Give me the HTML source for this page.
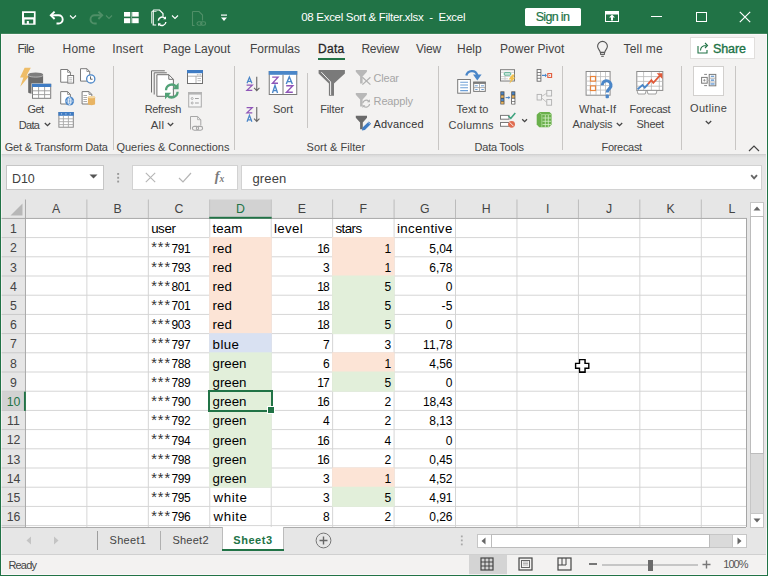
<!DOCTYPE html>
<html><head><meta charset="utf-8"><style>
html,body{margin:0;padding:0;width:768px;height:576px;overflow:hidden;background:#217346;}
body{position:relative;font-family:"Liberation Sans", sans-serif;}
.t{position:absolute;line-height:0;white-space:nowrap;font-family:"Liberation Sans", sans-serif;}
svg{overflow:visible}
</style></head><body>
<div style="position:absolute;left:0px;top:0px;width:768px;height:576px;background:#217346"></div>
<div style="position:absolute;left:1px;top:34px;width:766px;height:541px;background:#f3f2f1"></div>
<div style="position:absolute;left:1px;top:33px;width:766px;height:1px;background:#40845c"></div>
<div style="position:absolute;left:1px;top:34px;width:766px;height:1px;background:#fbf9f9"></div>
<svg style="position:absolute;left:0px;top:0px;" width="768" height="576" viewBox="0 0 768 576"><path d="M22 11.3H35.6V24.7H22z M24 13.1H33.9V17.3H24z M24.6 19.5H33.2V23.6H28.9V21.1H26.8V23.6H24.6z" fill="#fff" fill-rule="evenodd"/></svg>
<svg style="position:absolute;left:49px;top:10px;" width="18" height="16" viewBox="0 0 18 16"><path d="M2 5.3H9.6a4.1 4.1 0 0 1 0 8.2H7.5" fill="none" stroke="#fff" stroke-width="1.9"/><path d="M5.6 1.6L1.8 5.3l3.8 3.7" fill="none" stroke="#fff" stroke-width="1.9"/></svg>
<svg style="position:absolute;left:69px;top:14px;" width="8" height="6" viewBox="0 0 8 6"><path d="M1 1.5l3 3 3-3" fill="none" stroke="#fff" stroke-width="1.1"/></svg>
<svg style="position:absolute;left:87px;top:10px;" width="18" height="16" viewBox="0 0 18 16"><path d="M15.2 5.3H7.6a4.1 4.1 0 0 0 0 8.2H9.7" fill="none" stroke="#4f8f67" stroke-width="1.9"/><path d="M11.4 1.6l3.8 3.7-3.8 3.7" fill="none" stroke="#4f8f67" stroke-width="1.9"/></svg>
<svg style="position:absolute;left:105px;top:14px;" width="8" height="6" viewBox="0 0 8 6"><path d="M1 1.5l3 3 3-3" fill="none" stroke="#4f8f67" stroke-width="1.1"/></svg>
<svg style="position:absolute;left:123.5px;top:12px;" width="15" height="12" viewBox="0 0 15 12"><rect x="0" y="0" width="6.2" height="4.6" fill="#fff"/><rect x="8.2" y="0" width="6.5" height="4.6" fill="#fff"/><rect x="0" y="6.2" width="6.2" height="5" fill="#fff"/><rect x="8.2" y="6.2" width="6.5" height="5" fill="#fff"/><rect x="6.9" y="0" width="0.8" height="11.2" fill="#9fc4ad"/></svg>
<svg style="position:absolute;left:150px;top:9px;" width="18" height="18" viewBox="0 0 18 18"><path d="M1.5 2.5h5M1.5 2.5v12" fill="none" stroke="#bcd6c4" stroke-width="1"/><path d="M3.2 1h6.3l3.5 3.5v3" fill="none" stroke="#fff" stroke-width="1.2"/><path d="M3.2 1v15h3" fill="none" stroke="#fff" stroke-width="1.2"/><path d="M8.3 11.6a3.9 3.9 0 0 1 6.8-2.2M15.9 13a3.9 3.9 0 0 1-6.8 2.2" fill="none" stroke="#fff" stroke-width="1.4"/><path d="M16 7.3v2.9h-2.9zM8 17.2v-2.9h2.9z" fill="#fff"/></svg>
<svg style="position:absolute;left:171px;top:14px;" width="8" height="6" viewBox="0 0 8 6"><path d="M1 1.5l3 3 3-3" fill="none" stroke="#fff" stroke-width="1.1"/></svg>
<svg style="position:absolute;left:191px;top:10px;" width="15" height="17" viewBox="0 0 15 17"><path d="M1.5 1.5h6.5l3.5 3.5v5.5M1.5 1.5v14h2" fill="none" stroke="#4f8f67" stroke-width="1.1"/><path d="M6 13.5a1.7 1.7 0 0 1 1.7-1.7h1.6a1.7 1.7 0 0 1 0 3.4h-1.6A1.7 1.7 0 0 1 6 13.5zM9.6 13.5a1.7 1.7 0 0 1 1.7-1.7h1.6a1.7 1.7 0 0 1 0 3.4h-1.6a1.7 1.7 0 0 1-1.7-1.7z" fill="none" stroke="#4f8f67" stroke-width="1.1"/></svg>
<svg style="position:absolute;left:220px;top:14px;" width="8" height="8" viewBox="0 0 8 8"><rect x="1" y="0.5" width="6" height="1.2" fill="#fff"/><path d="M1 3.5h6l-3 3.5z" fill="#fff"/></svg>
<div class="t" style="left:301.25px;top:17.00px;font-size:11.5px;color:#fff;font-weight:normal;letter-spacing:-0.303px;white-space:pre">08 Excel Sort &amp; Filter.xlsx  -  Excel</div>
<div style="position:absolute;left:525px;top:8px;width:56px;height:18px;background:#fff;border-radius:1.5px"></div>
<div class="t" style="left:535.70px;top:17.00px;font-size:12.5px;color:#217346;font-weight:normal;letter-spacing:-0.661px;-webkit-text-stroke:0.2px currentColor">Sign in</div>
<svg style="position:absolute;left:605px;top:11px;" width="14" height="11" viewBox="0 0 14 11"><rect x="0.5" y="0.5" width="13" height="10" fill="none" stroke="#fff" stroke-width="1"/><rect x="1" y="1" width="12" height="2.5" fill="#fff"/><path d="M7 3.5l-3 3h2v3h2v-3h2z" fill="#fff"/></svg>
<div style="position:absolute;left:651px;top:16px;width:11px;height:1px;background:#fff"></div>
<div style="position:absolute;left:696px;top:12px;width:10px;height:9px;border:1px solid #fff;box-sizing:border-box;width:11px;height:10px"></div>
<svg style="position:absolute;left:739px;top:11px;" width="12" height="12" viewBox="0 0 12 12"><path d="M0.8 0.8l10.4 10.4M11.2 0.8L0.8 11.2" stroke="#fff" stroke-width="1.2"/></svg>
<div class="t" style="left:17.50px;top:49.00px;font-size:12px;color:#444;font-weight:normal;letter-spacing:-0.721px;">File</div>
<div class="t" style="left:62.50px;top:49.00px;font-size:12px;color:#444;font-weight:normal;letter-spacing:0.221px;">Home</div>
<div class="t" style="left:112.30px;top:49.00px;font-size:12px;color:#444;font-weight:normal;letter-spacing:0.154px;">Insert</div>
<div class="t" style="left:163.00px;top:49.00px;font-size:12px;color:#444;font-weight:normal;letter-spacing:-0.005px;">Page Layout</div>
<div class="t" style="left:250.00px;top:49.00px;font-size:12px;color:#444;font-weight:normal;letter-spacing:-0.001px;">Formulas</div>
<div class="t" style="left:318.00px;top:49.00px;font-size:12px;color:#262626;font-weight:normal;letter-spacing:0.275px;-webkit-text-stroke:0.3px currentColor">Data</div>
<div class="t" style="left:361.50px;top:49.00px;font-size:12px;color:#444;font-weight:normal;letter-spacing:-0.336px;">Review</div>
<div class="t" style="left:416.00px;top:49.00px;font-size:12px;color:#444;font-weight:normal;letter-spacing:-0.209px;">View</div>
<div class="t" style="left:457.00px;top:49.00px;font-size:12px;color:#444;font-weight:normal;letter-spacing:-0.002px;">Help</div>
<div class="t" style="left:500.00px;top:49.00px;font-size:12px;color:#444;font-weight:normal;letter-spacing:0.031px;">Power Pivot</div>
<div style="position:absolute;left:318px;top:58px;width:27px;height:2px;background:#217346"></div>
<svg style="position:absolute;left:0px;top:0px;" width="768" height="576" viewBox="0 0 768 576"><path d="M600.2 52.3C600.2 50.6 597.6 48.8 597.6 46.3A4.9 4.9 0 0 1 607.4 46.3C607.4 48.8 604.8 50.6 604.8 52.3z" fill="none" stroke="#555" stroke-width="1.1"/><rect x="600.6" y="52.6" width="3.8" height="1.8" fill="none" stroke="#555" stroke-width="1"/><path d="M601.2 56.3H603.8" stroke="#555" stroke-width="1"/></svg>
<div class="t" style="left:623.50px;top:49.00px;font-size:12px;color:#444;font-weight:normal;letter-spacing:0.194px;">Tell me</div>
<div style="position:absolute;left:690px;top:37px;width:65px;height:22px;background:#fff;border:1px solid #e1dfdd;box-sizing:border-box"></div>
<svg style="position:absolute;left:697px;top:41px;" width="12" height="13" viewBox="0 0 12 13"><path d="M1 5v7h9V9" fill="none" stroke="#217346" stroke-width="1.1"/><path d="M3.5 9.5c0-3.5 2.5-5 6-5M8 2l2.5 2.5L8 7" fill="none" stroke="#217346" stroke-width="1.1"/></svg>
<div class="t" style="left:713.00px;top:49.00px;font-size:12.5px;color:#217346;font-weight:normal;letter-spacing:-0.101px;-webkit-text-stroke:0.35px currentColor">Share</div>
<div style="position:absolute;left:1px;top:154px;width:765px;height:4px;background:linear-gradient(#cdcdcd,#dcdcdc 40%,#e6e6e6)"></div>
<div style="position:absolute;left:113px;top:66px;width:1px;height:84px;background:#c8c6c4"></div>
<div style="position:absolute;left:233.5px;top:66px;width:1px;height:84px;background:#c8c6c4"></div>
<div style="position:absolute;left:438px;top:66px;width:1px;height:84px;background:#c8c6c4"></div>
<div style="position:absolute;left:561.5px;top:66px;width:1px;height:84px;background:#c8c6c4"></div>
<div style="position:absolute;left:681px;top:66px;width:1px;height:84px;background:#c8c6c4"></div>
<div style="position:absolute;left:735px;top:66px;width:1px;height:84px;background:#c8c6c4"></div>
<div style="position:absolute;left:307px;top:73px;width:1px;height:55px;background:#c8c6c4"></div>
<div class="t" style="left:4.70px;top:147.00px;font-size:11px;color:#444;font-weight:normal;letter-spacing:-0.198px;">Get &amp; Transform Data</div>
<div class="t" style="left:116.40px;top:147.00px;font-size:11px;color:#444;font-weight:normal;letter-spacing:-0.001px;">Queries &amp; Connections</div>
<div class="t" style="left:306.60px;top:147.00px;font-size:11px;color:#444;font-weight:normal;letter-spacing:0.033px;">Sort &amp; Filter</div>
<div class="t" style="left:474.60px;top:147.00px;font-size:11px;color:#444;font-weight:normal;letter-spacing:-0.263px;">Data Tools</div>
<div class="t" style="left:601.50px;top:147.00px;font-size:11px;color:#444;font-weight:normal;letter-spacing:-0.305px;">Forecast</div>
<svg style="position:absolute;left:748px;top:145px;" width="12" height="7" viewBox="0 0 12 7"><path d="M1 6l5-5 5 5" fill="none" stroke="#444" stroke-width="1.2"/></svg>
<div class="t" style="left:27.50px;top:109.00px;font-size:11px;color:#444;font-weight:normal;letter-spacing:-0.587px;">Get</div>
<div class="t" style="left:18.70px;top:125.00px;font-size:11px;color:#444;font-weight:normal;letter-spacing:-0.673px;">Data</div>
<svg style="position:absolute;left:44px;top:122px;" width="7" height="5" viewBox="0 0 7 5"><path d="M0.8 1l2.7 2.7L6.2 1" fill="none" stroke="#444" stroke-width="1.3"/></svg>
<svg style="position:absolute;left:0px;top:0px;" width="768" height="576" viewBox="0 0 768 576"><path d="M24.6 67.8H30.8L26.6 75.6H29.6L20.2 86.8L23.4 77.6H20z" fill="#eebd68"/><path d="M28.2 74.8C28.2 72.9 43.1 72.9 43.1 74.8V92.2C43.1 94.6 28.2 94.6 28.2 92.2z" fill="#6b6b6b"/><ellipse cx="35.65" cy="74.8" rx="7.45" ry="2.4" fill="#7d7d7d"/><path d="M28.4 75.6C30 77.6 41.3 77.6 42.9 75.6" fill="none" stroke="#cfcfcf" stroke-width="0.7"/><rect x="31.5" y="83.3" width="20" height="15.9" fill="#f3f2f1"/><rect x="32.5" y="84.3" width="18.2" height="14" fill="#fff" stroke="#7d7d7d" stroke-width="1"/><rect x="32" y="83.8" width="19.2" height="3.2" fill="#3f7cc4"/><path d="M32.5 90.8H50.7M32.5 94.6H50.7M38.6 87V98.3M44.6 87V98.3" stroke="#9a9a9a" stroke-width="0.9"/></svg>
<svg style="position:absolute;left:0px;top:0px;" width="768" height="576" viewBox="0 0 768 576"><path d="M60.7 69.5H67.6L70.4 72.3V82.2H60.7z" fill="#fff" stroke="#7a7a7a" stroke-width="1"/><path d="M67.6 69.5V72.3H70.4" fill="none" stroke="#7a7a7a" stroke-width="0.8"/><rect x="67.8" y="75.5" width="5.8" height="7.6" fill="#fff" stroke="#7a7a7a" stroke-width="1"/><path d="M69.2 77.7H72.2M69.2 79.4H72.2M69.2 81.1H72.2" stroke="#a8a8a8" stroke-width="0.7"/><path d="M80.5 68.7H86.9L89.7 71.5V81.1H80.5z" fill="#fff" stroke="#7a7a7a" stroke-width="1"/><path d="M86.9 68.7V71.5H89.7" fill="none" stroke="#7a7a7a" stroke-width="0.8"/><circle cx="90.75" cy="78.9" r="4.1" fill="#fff" stroke="#4a86c8" stroke-width="1.3"/><path d="M90.5 76.4V79.2H92.6" fill="none" stroke="#555" stroke-width="0.9"/><path d="M60.7 91.6H67.6L70.4 94.4V104H60.7z" fill="#fff" stroke="#7a7a7a" stroke-width="1"/><path d="M67.6 91.6V94.4H70.4" fill="none" stroke="#7a7a7a" stroke-width="0.8"/><circle cx="69.6" cy="101" r="4.5" fill="#4a86c8"/><path d="M65.6 101H73.6M67.2 99.2H72M67.2 102.8H72" stroke="#fff" stroke-width="0.7"/><path d="M69.6 96.8C68 98.5 68 103.5 69.6 105.2M69.6 96.8C71.2 98.5 71.2 103.5 69.6 105.2" fill="none" stroke="#fff" stroke-width="0.7"/><path d="M82.1 91.6H89L91.8 94.4V104H82.1z" fill="#fff" stroke="#7a7a7a" stroke-width="1"/><path d="M89 91.6V94.4H91.8" fill="none" stroke="#7a7a7a" stroke-width="0.8"/><path d="M83.4 95.5H87M83.4 97.5H87M83.4 99.5H87M83.4 101.5H87" stroke="#888" stroke-width="0.7"/><path d="M87.9 97.2C87.9 95.8 95.1 95.8 95.1 97.2V104.1C95.1 105.6 87.9 105.6 87.9 104.1z" fill="#e8b463"/><ellipse cx="91.5" cy="97.2" rx="3.6" ry="1.1" fill="#f5d9a6"/></svg>
<svg style="position:absolute;left:0px;top:0px;" width="768" height="576" viewBox="0 0 768 576"><rect x="58.9" y="112.5" width="14.4" height="14.7" fill="#fff" stroke="#8a8a8a" stroke-width="1"/><rect x="58.4" y="112" width="15.4" height="3.8" fill="#3f7cc4"/><path d="M60.9 113.9H62.1M65.3 113.9H66.5M69.7 113.9H70.9" stroke="#dfe9f6" stroke-width="0.9"/><path d="M59 118.8H73.2M59 121.7H73.2M59 124.6H73.2M63.4 115.8V127.2M68.4 115.8V127.2" stroke="#a8a8a8" stroke-width="0.9"/></svg>
<div class="t" style="left:144.70px;top:109.00px;font-size:11px;color:#444;font-weight:normal;letter-spacing:-0.316px;">Refresh</div>
<div class="t" style="left:150.70px;top:125.00px;font-size:11.5px;color:#444;font-weight:normal;letter-spacing:0.237px;">All</div>
<svg style="position:absolute;left:167px;top:122px;" width="7" height="5" viewBox="0 0 7 5"><path d="M0.8 1l2.7 2.7L6.2 1" fill="none" stroke="#444" stroke-width="1.3"/></svg>
<svg style="position:absolute;left:0px;top:0px;" width="768" height="576" viewBox="0 0 768 576"><path d="M151.5 92.5V70.8H164.8" fill="none" stroke="#707070" stroke-width="1"/><path d="M154.2 94.5V72.8H166.8" fill="none" stroke="#707070" stroke-width="1"/><path d="M156.9 96.3V74.7H168.8L173.4 79.3V96.3z" fill="#fff" stroke="#707070" stroke-width="1"/><path d="M168.8 74.7V79.3H173.4" fill="none" stroke="#707070" stroke-width="1"/><path d="M166.0 90.2A5.8 5.8 0 0 1 176.2 86.6" fill="none" stroke="#52a277" stroke-width="2.3"/><path d="M177.6 91.8A5.8 5.8 0 0 1 167.4 95.4" fill="none" stroke="#52a277" stroke-width="2.3"/><path d="M178.6 82.8V89.2H172.4z" fill="#52a277"/><path d="M165.0 99.2V92.8H171.2z" fill="#52a277"/></svg>
<svg style="position:absolute;left:186px;top:69px;" width="18" height="16" viewBox="0 0 18 16"><rect x="1.5" y="1.5" width="15" height="13" fill="#fff" stroke="#707070" stroke-width="1"/><rect x="1" y="1" width="16" height="3.2" fill="#3f7cc4"/><path d="M2 7.2h14" stroke="#a0a0a0" stroke-width="0.8"/><path d="M10 7.2v6.8" stroke="#a0a0a0" stroke-width="0.8"/><circle cx="11.3" cy="5.7" r="0.5" fill="#888"/><circle cx="13" cy="5.7" r="0.5" fill="#888"/><circle cx="14.7" cy="5.7" r="0.5" fill="#888"/><path d="M11.5 9.5h3.5M11.5 11.7h3.5" stroke="#b0b0b0" stroke-width="0.8"/></svg>
<svg style="position:absolute;left:0px;top:0px;" width="768" height="576" viewBox="0 0 768 576"><rect x="188.7" y="92.5" width="12.6" height="14.5" fill="#f6f6f6" stroke="#ababab" stroke-width="1"/><rect x="188.2" y="92" width="13.6" height="2.6" fill="#b4b4b4"/><circle cx="192.2" cy="98.5" r="1" fill="none" stroke="#a0a0a0" stroke-width="0.8"/><circle cx="192.2" cy="103" r="1" fill="none" stroke="#a0a0a0" stroke-width="0.8"/><path d="M195 98.5H198.8M195 103H198.8" stroke="#a0a0a0" stroke-width="1"/></svg>
<svg style="position:absolute;left:0px;top:0px;" width="768" height="576" viewBox="0 0 768 576"><path d="M190.5 129.5V116.5H197.6L200.8 119.7V125.5" fill="none" stroke="#a6a6a6" stroke-width="1"/><path d="M197.6 116.5V119.7H200.8" fill="none" stroke="#a6a6a6" stroke-width="0.8"/><path d="M192.4 128.3a1.9 1.9 0 0 1 1.9-1.9h2.4a1.9 1.9 0 0 1 0 3.8h-2.4a1.9 1.9 0 0 1-1.9-1.9zM196.4 128.3a1.9 1.9 0 0 1 1.9-1.9h2.4a1.9 1.9 0 0 1 0 3.8h-2.4a1.9 1.9 0 0 1-1.9-1.9z" fill="none" stroke="#a6a6a6" stroke-width="1.1"/></svg>
<svg style="position:absolute;left:0;top:0" width="768" height="576"><path d="M247.02 83.30L249.45 77.30L251.88 83.30M247.97 81.41H250.93" fill="none" stroke="#4a86c8" stroke-width="1.25"/><path d="M246.60 85.12H252.30L246.90 90.38H252.30" fill="none" stroke="#8f56b8" stroke-width="1.25" stroke-linejoin="miter"/><path d="M256.75 76.8V90.5M254.05 87.8L256.75 90.6L259.45 87.8" fill="none" stroke="#666" stroke-width="1.1"/><path d="M246.60 107.62H252.30L246.90 112.88H252.30" fill="none" stroke="#8f56b8" stroke-width="1.25" stroke-linejoin="miter"/><path d="M247.02 121.80L249.45 115.30L251.88 121.80M247.97 119.76H250.93" fill="none" stroke="#4a86c8" stroke-width="1.25"/><path d="M256.75 107V121.3M254.05 118.6L256.75 121.39999999999999L259.45 118.6" fill="none" stroke="#666" stroke-width="1.1"/><rect x="269.25" y="71.5" width="27.5" height="23" fill="#fff" stroke="#7a7a7a" stroke-width="1"/><rect x="268.75" y="71" width="28.5" height="3.8" fill="#4a86c8"/><path d="M283 74.8V94.5" stroke="#7a7a7a" stroke-width="1"/><path d="M272.20 77.10H278.00L272.50 83.20H278.00" fill="none" stroke="#8f56b8" stroke-width="1.4" stroke-linejoin="miter"/><path d="M272.47 93.00L275.00 85.40L277.53 93.00M273.44 90.63H276.56" fill="none" stroke="#4a86c8" stroke-width="1.4"/><path d="M286.27 83.90L289.30 76.70L292.33 83.90M287.48 81.65H291.12" fill="none" stroke="#4a86c8" stroke-width="1.4"/><path d="M286.20 85.80H292.80L286.50 92.30H292.80" fill="none" stroke="#8f56b8" stroke-width="1.4" stroke-linejoin="miter"/></svg>
<div class="t" style="left:272.90px;top:109.00px;font-size:11px;color:#444;font-weight:normal;letter-spacing:-0.039px;">Sort</div>
<svg style="position:absolute;left:0px;top:0px;" width="768" height="576" viewBox="0 0 768 576"><path d="M318.6 70H344.9V73.6L334 83.6V95.8H328.9V83.6L318.6 73.6z" fill="#7a7a7a"/><path d="M321.3 72.1L330.6 81.9V95" fill="none" stroke="#f0f0f0" stroke-width="1"/></svg>
<div class="t" style="left:320.20px;top:109.00px;font-size:11px;color:#444;font-weight:normal;letter-spacing:-0.116px;">Filter</div>
<svg style="position:absolute;left:0px;top:0px;" width="768" height="576" viewBox="0 0 768 576"><path d="M355.8 70H366.9V71.8L362.6 76.5V83.5H360.1V76.5L355.8 71.8z" fill="#b8b8b8"/><path d="M362.4 77.2L370.4 84.6M370.4 77.2L362.4 84.6" stroke="#b0b0b0" stroke-width="1.2"/></svg>
<div class="t" style="left:373.60px;top:78.00px;font-size:11px;color:#a6a6a6;font-weight:normal;letter-spacing:-0.231px;">Clear</div>
<svg style="position:absolute;left:0px;top:0px;" width="768" height="576" viewBox="0 0 768 576"><path d="M355.8 92.9H366.9V94.7L362.6 99.4V106.4H360.1V99.4L355.8 94.7z" fill="#b8b8b8"/><path d="M362.8 103.2A3.5 3.5 0 0 1 368.8 101.3M369.6 104.2A3.5 3.5 0 0 1 363.6 106.1" fill="none" stroke="#b0b0b0" stroke-width="1.2"/><path d="M369.9 99.3V102.2H367z M362.5 108.1V105.2H365.4z" fill="#b0b0b0"/></svg>
<div class="t" style="left:373.60px;top:101.00px;font-size:11px;color:#a6a6a6;font-weight:normal;letter-spacing:-0.143px;">Reapply</div>
<svg style="position:absolute;left:0px;top:0px;" width="768" height="576" viewBox="0 0 768 576"><path d="M355.8 115.8H367V117.7L362.8 122.6V129.2H360.1V122.6L355.8 117.7z" fill="#6a6a6a"/><path d="M361.9 130.6L362.6 127.6L368.8 121.4L371.1 123.7L364.9 129.9z" fill="#3f7cc4"/><path d="M368 122.2L370.3 124.5" stroke="#f3f2f1" stroke-width="0.6"/></svg>
<div class="t" style="left:373.60px;top:124.00px;font-size:11px;color:#333;font-weight:normal;letter-spacing:0.142px;">Advanced</div>
<svg style="position:absolute;left:0px;top:0px;" width="768" height="576" viewBox="0 0 768 576"><path d="M466.3 75.6C467.5 70.5 475.5 69 477.4 75.5" fill="none" stroke="#4a86c8" stroke-width="2.3"/><path d="M473 74.6H481.6L477.3 80.6z" fill="#4a86c8"/><rect x="457.7" y="79.5" width="12.7" height="13.7" fill="#fff" stroke="#7a7a7a" stroke-width="1"/><path d="M460.2 82.2H468M460.2 85H468M460.2 87.8H468M460.2 90.6H468" stroke="#6d9fd6" stroke-width="1.1"/><rect x="473.7" y="82.2" width="11.6" height="9.2" fill="#fff" stroke="#7a7a7a" stroke-width="1"/><rect x="473.2" y="81.7" width="12.6" height="2.2" fill="#7a7a7a"/><path d="M479.5 83.9V91.4M473.7 87.6H485.3" stroke="#9a9a9a" stroke-width="0.8"/><path d="M474.9 85.8H477.8M481 85.8H484M475.2 89.5H477.6M481.3 89.5H483.8" stroke="#6d9fd6" stroke-width="1"/></svg>
<div class="t" style="left:456.40px;top:109.00px;font-size:11px;color:#444;font-weight:normal;letter-spacing:-0.064px;">Text to</div>
<div class="t" style="left:448.60px;top:125.00px;font-size:11px;color:#444;font-weight:normal;letter-spacing:0.266px;">Columns</div>
<svg style="position:absolute;left:0px;top:0px;" width="768" height="576" viewBox="0 0 768 576"><rect x="500.5" y="69.7" width="14" height="11.3" fill="#fff" stroke="#7a7a7a" stroke-width="1"/><path d="M501 72.3H514M501 76.6H514M501 78.8H508M505 72.3V80.5" stroke="#c4c4c4" stroke-width="0.8"/><rect x="504.3" y="72.8" width="6.4" height="2.3" rx="0.6" fill="#fff" stroke="#45a884" stroke-width="1"/><path d="M512.2 74.5L508.6 79.6H511L509.3 83.8L515.5 77.6H513L514.8 74.5z" fill="#f2c14e"/><rect x="537.1" y="69.6" width="3.8" height="11.6" fill="#fff" stroke="#666" stroke-width="0.9"/><path d="M537.1 72.5H541M537.1 75.4H541M537.1 78.3H541" stroke="#666" stroke-width="0.8"/><path d="M542 75.4H546" stroke="#4a86c8" stroke-width="1.2"/><path d="M545 73.6L547 75.4L545 77.2z" fill="#4a86c8"/><rect x="547.8" y="73.6" width="3.8" height="3.8" fill="#fff" stroke="#e05a3a" stroke-width="1.1"/><rect x="549.3" y="75.1" width="0.9" height="0.9" fill="#777"/><rect x="500.4" y="91.4" width="4" height="13" fill="#444"/><rect x="501.1" y="92.2" width="2.6" height="2.4" fill="#4a86c8"/><rect x="501.1" y="95.4" width="2.6" height="2.4" fill="#eab55c"/><rect x="501.1" y="98.6" width="2.6" height="2.4" fill="#4a86c8"/><rect x="501.1" y="101.6" width="2.6" height="2.2" fill="#eab55c"/><rect x="511.3" y="91.4" width="4" height="13" fill="#444"/><rect x="512" y="92.2" width="2.6" height="2.4" fill="#4a86c8"/><rect x="512" y="95.4" width="2.6" height="2.4" fill="#eab55c"/><rect x="512" y="98.6" width="2.6" height="2.4" fill="#fff"/><rect x="512" y="101.6" width="2.6" height="2.2" fill="#fff"/><path d="M505.6 97.6H509" stroke="#4a86c8" stroke-width="1.1"/><path d="M508.4 95.9L510.3 97.6L508.4 99.3z" fill="#4a86c8"/><g fill="#f3f3f3" stroke="#b0b0b0" stroke-width="0.9"><rect x="537.1" y="94.4" width="4.4" height="5.6"/><rect x="546.8" y="90.4" width="4.8" height="5.6"/><rect x="546.8" y="99.6" width="4.8" height="5.6"/></g><path d="M541.5 96.5L546.8 93.2M541.5 97.8L546.8 102.4" stroke="#b8b8b8" stroke-width="0.8"/><rect x="500.5" y="115.4" width="8.5" height="3.8" fill="#fff" stroke="#7a7a7a" stroke-width="1"/><rect x="500.5" y="122.5" width="8.5" height="3.8" fill="#fff" stroke="#7a7a7a" stroke-width="1"/><path d="M508.3 116L510.8 118.3L515.3 113" fill="none" stroke="#3ea37f" stroke-width="1.5"/><circle cx="511.6" cy="124.3" r="3.4" fill="#e06c50"/><path d="M509.6 122.3L513.6 126.3" stroke="#fff" stroke-width="0.9"/><path d="M522.2 119.2L524.6 121.6L527 119.2" fill="none" stroke="#444" stroke-width="1.3"/><path d="M539.5 112H549.5L551.6 114.1V124.6L549 127.3H539.2L536.7 124.6V114.8z" fill="#6ab04c"/><path d="M539.3 112.2L541.8 114.6H551.5M541.8 114.6V127" fill="none" stroke="#a6d68f" stroke-width="0.9"/><path d="M542.5 118H551M542.5 121.3H551M542.5 124.5H551M545.3 115V127M548.3 115V127" stroke="#d6f0c8" stroke-width="0.8"/></svg>
<svg style="position:absolute;left:0px;top:0px;" width="768" height="576" viewBox="0 0 768 576"><rect x="586.1" y="71.5" width="24" height="23.7" fill="#fff" stroke="#8a8a8a" stroke-width="1"/><path d="M586.5 76.6H609.8M586.5 81.1H609.8M586.5 85.6H609.8M586.5 90.1H609.8M590.4 72V95M596 72V95M600.5 72V95M605.5 72V95" stroke="#bdbdbd" stroke-width="0.8"/><rect x="590.5" y="76.5" width="5" height="4.6" fill="#fff" stroke="#e8843c" stroke-width="1.2"/><rect x="590.5" y="85.9" width="5" height="4.6" fill="#fff" stroke="#e8843c" stroke-width="1.2"/><path d="M602.2 85.2A4.4 4.4 0 1 1 609.8 88.2C608.4 89.6 607.2 90.2 607.2 92.6" fill="none" stroke="#4a86c8" stroke-width="3.1"/><rect x="605.6" y="94.6" width="3.3" height="3.6" rx="0.8" fill="#4a86c8"/></svg>
<div class="t" style="left:579.00px;top:109.00px;font-size:11px;color:#444;font-weight:normal;letter-spacing:0.268px;">What-If</div>
<div class="t" style="left:572.50px;top:124.00px;font-size:11px;color:#444;font-weight:normal;letter-spacing:-0.123px;">Analysis</div>
<svg style="position:absolute;left:616.3px;top:122px;" width="7" height="5" viewBox="0 0 7 5"><path d="M0.8 1l2.7 2.7L6.2 1" fill="none" stroke="#444" stroke-width="1.3"/></svg>
<svg style="position:absolute;left:0px;top:0px;" width="768" height="576" viewBox="0 0 768 576"><rect x="636.8" y="71.5" width="26" height="18.9" fill="#fff" stroke="#8a8a8a" stroke-width="1"/><path d="M637 76.6H662.5M637 81.4H662.5M637 86.2H662.5M643.6 72V90M651.4 72V90M659.3 72V90" stroke="#b8b8b8" stroke-width="0.8"/><path d="M637 90.4H646.2L645.2 94H638z M647 90.4H657L656 94H648z" fill="#fff" stroke="#8a8a8a" stroke-width="0.8"/><path d="M637.6 89.3L642.5 85L644.7 87.6L648.2 84" fill="none" stroke="#4a86c8" stroke-width="1.8"/><path d="M648 84.2L651.4 80.2L653.3 82.8L659.8 75.6" fill="none" stroke="#e05a3a" stroke-width="1.8"/><path d="M656.6 73.2H662.4V79z" fill="#e05a3a"/></svg>
<div class="t" style="left:629.50px;top:109.00px;font-size:11px;color:#444;font-weight:normal;letter-spacing:-0.234px;">Forecast</div>
<div class="t" style="left:636.60px;top:124.00px;font-size:11px;color:#444;font-weight:normal;letter-spacing:-0.322px;">Sheet</div>
<div style="position:absolute;left:693px;top:66px;width:31px;height:30px;background:#fff;border:1px solid #d2d0ce;box-sizing:border-box"></div>
<svg style="position:absolute;left:0px;top:0px;" width="768" height="576" viewBox="0 0 768 576"><rect x="701.6" y="77.4" width="5.6" height="5.8" fill="#fff" stroke="#7a7a7a" stroke-width="1"/><path d="M703.2 80.3H705.6M704.4 79.1V81.5" stroke="#888" stroke-width="0.8"/><path d="M704.2 74.4H707M704.2 85.6H707" stroke="#7a7a7a" stroke-width="0.9"/><path d="M707.2 80.3H708.8" stroke="#c0c0c0" stroke-width="1"/><rect x="709.2" y="74.4" width="6.6" height="11.4" fill="#fff" stroke="#7a7a7a" stroke-width="1"/><path d="M709.5 78.2H715.5M709.5 82H715.5" stroke="#a0a0a0" stroke-width="0.8"/><path d="M710.8 76.3H714.2M710.8 80.1H714.2" stroke="#4a86c8" stroke-width="1.1"/><rect x="710.4" y="83" width="4.2" height="1.9" fill="#8fb5e0"/></svg>
<div class="t" style="left:690.00px;top:108.00px;font-size:11px;color:#444;font-weight:normal;letter-spacing:0.327px;">Outline</div>
<svg style="position:absolute;left:704.5px;top:119.5px;" width="7" height="5" viewBox="0 0 7 5"><path d="M0.8 1l2.7 2.7L6.2 1" fill="none" stroke="#444" stroke-width="1.3"/></svg>
<div style="position:absolute;left:1px;top:158px;width:765px;height:42px;background:#e6e6e6"></div>
<div style="position:absolute;left:6px;top:165px;width:98px;height:25px;background:#fff;border:1px solid #c6c6c6;box-sizing:border-box"></div>
<div class="t" style="left:12.00px;top:179.00px;font-size:12.5px;color:#404040;font-weight:normal;letter-spacing:-0.140px;">D10</div>
<svg style="position:absolute;left:89px;top:174px;" width="9" height="5" viewBox="0 0 9 5"><path d="M0.5 0.5h8L4.5 4.5z" fill="#555"/></svg>
<svg style="position:absolute;left:0px;top:0px;" width="768" height="576" viewBox="0 0 768 576"><rect x="117.2" y="173" width="1.9" height="1.9" fill="#999"/><rect x="117.2" y="176.8" width="1.9" height="1.9" fill="#999"/><rect x="117.2" y="180.6" width="1.9" height="1.9" fill="#999"/></svg>
<div style="position:absolute;left:132px;top:165px;width:106px;height:25px;background:#fff;border:1px solid #d2d2d2;box-sizing:border-box"></div>
<svg style="position:absolute;left:145px;top:172px;" width="11" height="11" viewBox="0 0 11 11"><path d="M0.8 0.8l9.4 9.4M10.2 0.8L0.8 10.2" stroke="#b5b5b5" stroke-width="1.1"/></svg>
<svg style="position:absolute;left:178px;top:172px;" width="14" height="11" viewBox="0 0 14 11"><path d="M1 6l4 4 8-9" fill="none" stroke="#b5b5b5" stroke-width="1.2"/></svg>
<div class="t" style="left:214.8px;top:176.5px;font:italic bold 14px 'Liberation Serif',serif;line-height:0;color:#7a7a7a">f</div>
<div class="t" style="left:219.5px;top:179px;font:italic bold 9.5px 'Liberation Serif',serif;line-height:0;color:#7a7a7a">x</div>
<div style="position:absolute;left:241px;top:165px;width:521px;height:25px;background:#fff;border:1px solid #d2d2d2;box-sizing:border-box"></div>
<div class="t" style="left:252.40px;top:179.00px;font-size:13px;color:#404040;font-weight:normal;letter-spacing:0.170px;">green</div>
<svg style="position:absolute;left:0px;top:0px;" width="768" height="576" viewBox="0 0 768 576"><path d="M751.2 175.2L754.1 178.3L757 175.2" fill="none" stroke="#666" stroke-width="1.9"/></svg>
<div style="position:absolute;left:746px;top:199.5px;width:21px;height:328.5px;background:#e6e6e6"></div>
<svg style="position:absolute;left:0;top:0" width="768" height="576" viewBox="0 0 768 576"><rect x="1.000" y="199.500" width="745.000" height="327.500" fill="#e6e6e6"/><rect x="25.920" y="218.880" width="720.080" height="308.120" fill="#fff"/><rect x="25.920" y="237.120" width="720.080" height="0.960" fill="#d4d4d4"/><rect x="25.920" y="256.320" width="720.080" height="0.960" fill="#d4d4d4"/><rect x="25.920" y="275.520" width="720.080" height="0.960" fill="#d4d4d4"/><rect x="25.920" y="294.720" width="720.080" height="0.960" fill="#d4d4d4"/><rect x="25.920" y="313.920" width="720.080" height="0.960" fill="#d4d4d4"/><rect x="25.920" y="333.120" width="720.080" height="0.960" fill="#d4d4d4"/><rect x="25.920" y="352.320" width="720.080" height="0.960" fill="#d4d4d4"/><rect x="25.920" y="371.520" width="720.080" height="0.960" fill="#d4d4d4"/><rect x="25.920" y="390.720" width="720.080" height="0.960" fill="#d4d4d4"/><rect x="25.920" y="409.920" width="720.080" height="0.960" fill="#d4d4d4"/><rect x="25.920" y="429.120" width="720.080" height="0.960" fill="#d4d4d4"/><rect x="25.920" y="448.320" width="720.080" height="0.960" fill="#d4d4d4"/><rect x="25.920" y="467.520" width="720.080" height="0.960" fill="#d4d4d4"/><rect x="25.920" y="486.720" width="720.080" height="0.960" fill="#d4d4d4"/><rect x="25.920" y="505.920" width="720.080" height="0.960" fill="#d4d4d4"/><rect x="25.920" y="525.120" width="720.080" height="0.960" fill="#d4d4d4"/><rect x="86.400" y="218.880" width="0.960" height="308.120" fill="#d4d4d4"/><rect x="147.840" y="218.880" width="0.960" height="308.120" fill="#d4d4d4"/><rect x="209.280" y="218.880" width="0.960" height="308.120" fill="#d4d4d4"/><rect x="270.720" y="218.880" width="0.960" height="308.120" fill="#d4d4d4"/><rect x="332.160" y="218.880" width="0.960" height="308.120" fill="#d4d4d4"/><rect x="393.600" y="218.880" width="0.960" height="308.120" fill="#d4d4d4"/><rect x="455.040" y="218.880" width="0.960" height="308.120" fill="#d4d4d4"/><rect x="516.480" y="218.880" width="0.960" height="308.120" fill="#d4d4d4"/><rect x="577.920" y="218.880" width="0.960" height="308.120" fill="#d4d4d4"/><rect x="639.360" y="218.880" width="0.960" height="308.120" fill="#d4d4d4"/><rect x="700.800" y="218.880" width="0.960" height="308.120" fill="#d4d4d4"/><rect x="209.280" y="237.120" width="62.400" height="96.960" fill="#fce4d6"/><rect x="209.280" y="333.120" width="62.400" height="20.160" fill="#d9e1f2"/><rect x="209.280" y="352.320" width="62.400" height="135.360" fill="#e2efda"/><rect x="332.160" y="237.120" width="62.400" height="39.360" fill="#fce4d6"/><rect x="332.160" y="275.520" width="62.400" height="58.560" fill="#e2efda"/><rect x="332.160" y="352.320" width="62.400" height="20.160" fill="#fce4d6"/><rect x="332.160" y="371.520" width="62.400" height="20.160" fill="#e2efda"/><rect x="332.160" y="467.520" width="62.400" height="20.160" fill="#fce4d6"/><rect x="332.160" y="486.720" width="62.400" height="20.160" fill="#e2efda"/><rect x="210.240" y="199.500" width="60.480" height="18.420" fill="#d2d2d2"/><rect x="86.400" y="199.500" width="0.960" height="18.420" fill="#bababa"/><rect x="147.840" y="199.500" width="0.960" height="18.420" fill="#bababa"/><rect x="209.280" y="199.500" width="0.960" height="18.420" fill="#bababa"/><rect x="270.720" y="199.500" width="0.960" height="18.420" fill="#bababa"/><rect x="332.160" y="199.500" width="0.960" height="18.420" fill="#bababa"/><rect x="393.600" y="199.500" width="0.960" height="18.420" fill="#bababa"/><rect x="455.040" y="199.500" width="0.960" height="18.420" fill="#bababa"/><rect x="516.480" y="199.500" width="0.960" height="18.420" fill="#bababa"/><rect x="577.920" y="199.500" width="0.960" height="18.420" fill="#bababa"/><rect x="639.360" y="199.500" width="0.960" height="18.420" fill="#bababa"/><rect x="700.800" y="199.500" width="0.960" height="18.420" fill="#bababa"/><rect x="1.000" y="391.680" width="23.960" height="18.240" fill="#d2d2d2"/><rect x="1.000" y="237.120" width="23.960" height="0.960" fill="#c8c8c8"/><rect x="1.000" y="256.320" width="23.960" height="0.960" fill="#c8c8c8"/><rect x="1.000" y="275.520" width="23.960" height="0.960" fill="#c8c8c8"/><rect x="1.000" y="294.720" width="23.960" height="0.960" fill="#c8c8c8"/><rect x="1.000" y="313.920" width="23.960" height="0.960" fill="#c8c8c8"/><rect x="1.000" y="333.120" width="23.960" height="0.960" fill="#c8c8c8"/><rect x="1.000" y="352.320" width="23.960" height="0.960" fill="#c8c8c8"/><rect x="1.000" y="371.520" width="23.960" height="0.960" fill="#c8c8c8"/><rect x="1.000" y="390.720" width="23.960" height="0.960" fill="#c8c8c8"/><rect x="1.000" y="409.920" width="23.960" height="0.960" fill="#c8c8c8"/><rect x="1.000" y="429.120" width="23.960" height="0.960" fill="#c8c8c8"/><rect x="1.000" y="448.320" width="23.960" height="0.960" fill="#c8c8c8"/><rect x="1.000" y="467.520" width="23.960" height="0.960" fill="#c8c8c8"/><rect x="1.000" y="486.720" width="23.960" height="0.960" fill="#c8c8c8"/><rect x="1.000" y="505.920" width="23.960" height="0.960" fill="#c8c8c8"/><rect x="1.000" y="525.120" width="23.960" height="0.960" fill="#c8c8c8"/><rect x="1.000" y="217.920" width="745.000" height="0.960" fill="#a6a6a6"/><rect x="24.960" y="199.500" width="0.960" height="327.500" fill="#a6a6a6"/><rect x="209.280" y="216.800" width="62.400" height="1.900" fill="#217346"/><rect x="23.960" y="391.680" width="1.900" height="19.200" fill="#217346"/><rect x="746.000" y="217.920" width="1.000" height="309.080" fill="#a6a6a6"/><path d="M22.5 203.5V215.5H10.5z" fill="#b7b7b7"/></svg>
<div class="t" style="left:56.17999999999999px;transform:translateX(-50%);top:209.19px;font-size:12.3px;color:#444;">A</div>
<div class="t" style="left:117.62px;transform:translateX(-50%);top:209.19px;font-size:12.3px;color:#444;">B</div>
<div class="t" style="left:179.06px;transform:translateX(-50%);top:209.19px;font-size:12.3px;color:#444;">C</div>
<div class="t" style="left:240.5px;transform:translateX(-50%);top:209.19px;font-size:12.3px;color:#217346;">D</div>
<div class="t" style="left:301.93999999999994px;transform:translateX(-50%);top:209.19px;font-size:12.3px;color:#444;">E</div>
<div class="t" style="left:363.38px;transform:translateX(-50%);top:209.19px;font-size:12.3px;color:#444;">F</div>
<div class="t" style="left:424.81999999999994px;transform:translateX(-50%);top:209.19px;font-size:12.3px;color:#444;">G</div>
<div class="t" style="left:486.26px;transform:translateX(-50%);top:209.19px;font-size:12.3px;color:#444;">H</div>
<div class="t" style="left:547.7px;transform:translateX(-50%);top:209.19px;font-size:12.3px;color:#444;">I</div>
<div class="t" style="left:609.14px;transform:translateX(-50%);top:209.19px;font-size:12.3px;color:#444;">J</div>
<div class="t" style="left:670.5799999999999px;transform:translateX(-50%);top:209.19px;font-size:12.3px;color:#444;">K</div>
<div class="t" style="left:732.02px;transform:translateX(-50%);top:209.19px;font-size:12.3px;color:#444;">L</div>
<div class="t" style="left:13.5px;transform:translateX(-50%);top:228.69px;font-size:12.3px;color:#444;">1</div>
<div class="t" style="left:13.5px;transform:translateX(-50%);top:247.69px;font-size:12.3px;color:#444;">2</div>
<div class="t" style="left:13.5px;transform:translateX(-50%);top:267.69px;font-size:12.3px;color:#444;">3</div>
<div class="t" style="left:13.5px;transform:translateX(-50%);top:286.69px;font-size:12.3px;color:#444;">4</div>
<div class="t" style="left:13.5px;transform:translateX(-50%);top:305.69px;font-size:12.3px;color:#444;">5</div>
<div class="t" style="left:13.5px;transform:translateX(-50%);top:324.69px;font-size:12.3px;color:#444;">6</div>
<div class="t" style="left:13.5px;transform:translateX(-50%);top:343.69px;font-size:12.3px;color:#444;">7</div>
<div class="t" style="left:13.5px;transform:translateX(-50%);top:363.69px;font-size:12.3px;color:#444;">8</div>
<div class="t" style="left:13.5px;transform:translateX(-50%);top:382.69px;font-size:12.3px;color:#444;">9</div>
<div class="t" style="left:13.5px;transform:translateX(-50%);top:401.69px;font-size:12.3px;color:#217346;">10</div>
<div class="t" style="left:13.5px;transform:translateX(-50%);top:420.69px;font-size:12.3px;color:#444;">11</div>
<div class="t" style="left:13.5px;transform:translateX(-50%);top:439.69px;font-size:12.3px;color:#444;">12</div>
<div class="t" style="left:13.5px;transform:translateX(-50%);top:459.69px;font-size:12.3px;color:#444;">13</div>
<div class="t" style="left:13.5px;transform:translateX(-50%);top:478.69px;font-size:12.3px;color:#444;">14</div>
<div class="t" style="left:13.5px;transform:translateX(-50%);top:497.69px;font-size:12.3px;color:#444;">15</div>
<div class="t" style="left:13.5px;transform:translateX(-50%);top:516.70px;font-size:12.3px;color:#444;">16</div>
<div class="t" style="left:151.14px;top:229.00px;font-size:13.3px;color:#000;font-weight:normal;letter-spacing:-0.396px;">user</div>
<div class="t" style="left:212.58px;top:229.00px;font-size:13.3px;color:#000;font-weight:normal;letter-spacing:0.089px;">team</div>
<div class="t" style="left:274.02px;top:229.00px;font-size:13.3px;color:#000;font-weight:normal;letter-spacing:0.339px;">level</div>
<div class="t" style="left:335.46px;top:229.00px;font-size:13.3px;color:#000;font-weight:normal;letter-spacing:-0.541px;">stars</div>
<div class="t" style="left:396.90px;top:229.00px;font-size:13.3px;color:#000;font-weight:normal;letter-spacing:0.364px;">incentive</div>
<div class="t" style="left:151.14px;top:247.00px;font-size:14.5px;color:#333;font-weight:normal;letter-spacing:1.107px;">***</div>
<div class="t" style="left:171.54px;top:249.00px;font-size:12px;color:#000;letter-spacing:-0.474px">791</div>
<div class="t" style="left:212.58px;top:249.00px;font-size:13.3px;color:#000;font-weight:normal;letter-spacing:0.088px;">red</div>
<div class="t" style="left:317.16px;top:249.00px;font-size:12px;color:#000;letter-spacing:-0.874px">16</div>
<div class="t" style="left:384.40px;top:249.00px;font-size:12px;color:#000;letter-spacing:0.000px">1</div>
<div class="t" style="left:429.24px;top:249.00px;font-size:12px;color:#000;letter-spacing:-0.027px">5,04</div>
<div class="t" style="left:151.14px;top:267.00px;font-size:14.5px;color:#333;font-weight:normal;letter-spacing:1.107px;">***</div>
<div class="t" style="left:171.54px;top:268.00px;font-size:12px;color:#000;letter-spacing:-0.474px">793</div>
<div class="t" style="left:212.58px;top:268.00px;font-size:13.3px;color:#000;font-weight:normal;letter-spacing:0.088px;">red</div>
<div class="t" style="left:322.96px;top:268.00px;font-size:12px;color:#000;letter-spacing:0.000px">3</div>
<div class="t" style="left:384.40px;top:268.00px;font-size:12px;color:#000;letter-spacing:0.000px">1</div>
<div class="t" style="left:429.24px;top:268.00px;font-size:12px;color:#000;letter-spacing:-0.027px">6,78</div>
<div class="t" style="left:151.14px;top:286.00px;font-size:14.5px;color:#333;font-weight:normal;letter-spacing:1.107px;">***</div>
<div class="t" style="left:171.54px;top:287.00px;font-size:12px;color:#000;letter-spacing:-0.474px">801</div>
<div class="t" style="left:212.58px;top:287.00px;font-size:13.3px;color:#000;font-weight:normal;letter-spacing:0.088px;">red</div>
<div class="t" style="left:317.16px;top:287.00px;font-size:12px;color:#000;letter-spacing:-0.874px">18</div>
<div class="t" style="left:384.40px;top:287.00px;font-size:12px;color:#000;letter-spacing:0.000px">5</div>
<div class="t" style="left:445.84px;top:287.00px;font-size:12px;color:#000;letter-spacing:0.000px">0</div>
<div class="t" style="left:151.14px;top:305.00px;font-size:14.5px;color:#333;font-weight:normal;letter-spacing:1.107px;">***</div>
<div class="t" style="left:171.54px;top:306.00px;font-size:12px;color:#000;letter-spacing:-0.474px">701</div>
<div class="t" style="left:212.58px;top:306.00px;font-size:13.3px;color:#000;font-weight:normal;letter-spacing:0.088px;">red</div>
<div class="t" style="left:317.16px;top:306.00px;font-size:12px;color:#000;letter-spacing:-0.874px">18</div>
<div class="t" style="left:384.40px;top:306.00px;font-size:12px;color:#000;letter-spacing:0.000px">5</div>
<div class="t" style="left:441.54px;top:306.00px;font-size:12px;color:#000;letter-spacing:0.304px">-5</div>
<div class="t" style="left:151.14px;top:324.00px;font-size:14.5px;color:#333;font-weight:normal;letter-spacing:1.107px;">***</div>
<div class="t" style="left:171.54px;top:325.00px;font-size:12px;color:#000;letter-spacing:-0.474px">903</div>
<div class="t" style="left:212.58px;top:325.00px;font-size:13.3px;color:#000;font-weight:normal;letter-spacing:0.088px;">red</div>
<div class="t" style="left:317.16px;top:325.00px;font-size:12px;color:#000;letter-spacing:-0.874px">18</div>
<div class="t" style="left:384.40px;top:325.00px;font-size:12px;color:#000;letter-spacing:0.000px">5</div>
<div class="t" style="left:445.84px;top:325.00px;font-size:12px;color:#000;letter-spacing:0.000px">0</div>
<div class="t" style="left:151.14px;top:343.00px;font-size:14.5px;color:#333;font-weight:normal;letter-spacing:1.107px;">***</div>
<div class="t" style="left:171.54px;top:345.00px;font-size:12px;color:#000;letter-spacing:-0.474px">797</div>
<div class="t" style="left:212.58px;top:345.00px;font-size:13.3px;color:#000;font-weight:normal;letter-spacing:0.419px;">blue</div>
<div class="t" style="left:322.96px;top:345.00px;font-size:12px;color:#000;letter-spacing:0.000px">7</div>
<div class="t" style="left:384.40px;top:345.00px;font-size:12px;color:#000;letter-spacing:0.000px">3</div>
<div class="t" style="left:423.04px;top:345.00px;font-size:12px;color:#000;letter-spacing:0.084px">11,78</div>
<div class="t" style="left:151.14px;top:363.00px;font-size:14.5px;color:#333;font-weight:normal;letter-spacing:1.107px;">***</div>
<div class="t" style="left:171.54px;top:364.00px;font-size:12px;color:#000;letter-spacing:-0.474px">788</div>
<div class="t" style="left:212.58px;top:364.00px;font-size:13.3px;color:#000;font-weight:normal;letter-spacing:-0.028px;">green</div>
<div class="t" style="left:322.96px;top:364.00px;font-size:12px;color:#000;letter-spacing:0.000px">6</div>
<div class="t" style="left:384.40px;top:364.00px;font-size:12px;color:#000;letter-spacing:0.000px">1</div>
<div class="t" style="left:429.24px;top:364.00px;font-size:12px;color:#000;letter-spacing:-0.027px">4,56</div>
<div class="t" style="left:151.14px;top:382.00px;font-size:14.5px;color:#333;font-weight:normal;letter-spacing:1.107px;">***</div>
<div class="t" style="left:171.54px;top:383.00px;font-size:12px;color:#000;letter-spacing:-0.474px">789</div>
<div class="t" style="left:212.58px;top:383.00px;font-size:13.3px;color:#000;font-weight:normal;letter-spacing:-0.028px;">green</div>
<div class="t" style="left:317.16px;top:383.00px;font-size:12px;color:#000;letter-spacing:-0.874px">17</div>
<div class="t" style="left:384.40px;top:383.00px;font-size:12px;color:#000;letter-spacing:0.000px">5</div>
<div class="t" style="left:445.84px;top:383.00px;font-size:12px;color:#000;letter-spacing:0.000px">0</div>
<div class="t" style="left:151.14px;top:401.00px;font-size:14.5px;color:#333;font-weight:normal;letter-spacing:1.107px;">***</div>
<div class="t" style="left:171.54px;top:402.00px;font-size:12px;color:#000;letter-spacing:-0.474px">790</div>
<div class="t" style="left:212.58px;top:402.00px;font-size:13.3px;color:#000;font-weight:normal;letter-spacing:-0.028px;">green</div>
<div class="t" style="left:317.16px;top:402.00px;font-size:12px;color:#000;letter-spacing:-0.874px">16</div>
<div class="t" style="left:384.40px;top:402.00px;font-size:12px;color:#000;letter-spacing:0.000px">2</div>
<div class="t" style="left:423.04px;top:402.00px;font-size:12px;color:#000;letter-spacing:-0.139px">18,43</div>
<div class="t" style="left:151.14px;top:420.00px;font-size:14.5px;color:#333;font-weight:normal;letter-spacing:1.107px;">***</div>
<div class="t" style="left:171.54px;top:421.00px;font-size:12px;color:#000;letter-spacing:-0.474px">792</div>
<div class="t" style="left:212.58px;top:421.00px;font-size:13.3px;color:#000;font-weight:normal;letter-spacing:-0.028px;">green</div>
<div class="t" style="left:322.96px;top:421.00px;font-size:12px;color:#000;letter-spacing:0.000px">4</div>
<div class="t" style="left:384.40px;top:421.00px;font-size:12px;color:#000;letter-spacing:0.000px">2</div>
<div class="t" style="left:429.24px;top:421.00px;font-size:12px;color:#000;letter-spacing:-0.027px">8,13</div>
<div class="t" style="left:151.14px;top:439.00px;font-size:14.5px;color:#333;font-weight:normal;letter-spacing:1.107px;">***</div>
<div class="t" style="left:171.54px;top:441.00px;font-size:12px;color:#000;letter-spacing:-0.474px">794</div>
<div class="t" style="left:212.58px;top:441.00px;font-size:13.3px;color:#000;font-weight:normal;letter-spacing:-0.028px;">green</div>
<div class="t" style="left:317.16px;top:441.00px;font-size:12px;color:#000;letter-spacing:-0.874px">16</div>
<div class="t" style="left:384.40px;top:441.00px;font-size:12px;color:#000;letter-spacing:0.000px">4</div>
<div class="t" style="left:445.84px;top:441.00px;font-size:12px;color:#000;letter-spacing:0.000px">0</div>
<div class="t" style="left:151.14px;top:459.00px;font-size:14.5px;color:#333;font-weight:normal;letter-spacing:1.107px;">***</div>
<div class="t" style="left:171.54px;top:460.00px;font-size:12px;color:#000;letter-spacing:-0.474px">798</div>
<div class="t" style="left:212.58px;top:460.00px;font-size:13.3px;color:#000;font-weight:normal;letter-spacing:-0.028px;">green</div>
<div class="t" style="left:317.16px;top:460.00px;font-size:12px;color:#000;letter-spacing:-0.874px">16</div>
<div class="t" style="left:384.40px;top:460.00px;font-size:12px;color:#000;letter-spacing:0.000px">2</div>
<div class="t" style="left:429.24px;top:460.00px;font-size:12px;color:#000;letter-spacing:-0.027px">0,45</div>
<div class="t" style="left:151.14px;top:478.00px;font-size:14.5px;color:#333;font-weight:normal;letter-spacing:1.107px;">***</div>
<div class="t" style="left:171.54px;top:479.00px;font-size:12px;color:#000;letter-spacing:-0.474px">799</div>
<div class="t" style="left:212.58px;top:479.00px;font-size:13.3px;color:#000;font-weight:normal;letter-spacing:-0.028px;">green</div>
<div class="t" style="left:322.96px;top:479.00px;font-size:12px;color:#000;letter-spacing:0.000px">3</div>
<div class="t" style="left:384.40px;top:479.00px;font-size:12px;color:#000;letter-spacing:0.000px">1</div>
<div class="t" style="left:429.24px;top:479.00px;font-size:12px;color:#000;letter-spacing:-0.027px">4,52</div>
<div class="t" style="left:151.14px;top:497.00px;font-size:14.5px;color:#333;font-weight:normal;letter-spacing:1.107px;">***</div>
<div class="t" style="left:171.54px;top:498.00px;font-size:12px;color:#000;letter-spacing:-0.474px">795</div>
<div class="t" style="left:213.58px;top:498.00px;font-size:13.3px;color:#000;font-weight:normal;letter-spacing:0.588px;">white</div>
<div class="t" style="left:322.96px;top:498.00px;font-size:12px;color:#000;letter-spacing:0.000px">3</div>
<div class="t" style="left:384.40px;top:498.00px;font-size:12px;color:#000;letter-spacing:0.000px">5</div>
<div class="t" style="left:429.24px;top:498.00px;font-size:12px;color:#000;letter-spacing:-0.027px">4,91</div>
<div class="t" style="left:151.14px;top:516.00px;font-size:14.5px;color:#333;font-weight:normal;letter-spacing:1.107px;">***</div>
<div class="t" style="left:171.54px;top:517.00px;font-size:12px;color:#000;letter-spacing:-0.474px">796</div>
<div class="t" style="left:213.58px;top:517.00px;font-size:13.3px;color:#000;font-weight:normal;letter-spacing:0.588px;">white</div>
<div class="t" style="left:322.96px;top:517.00px;font-size:12px;color:#000;letter-spacing:0.000px">8</div>
<div class="t" style="left:384.40px;top:517.00px;font-size:12px;color:#000;letter-spacing:0.000px">2</div>
<div class="t" style="left:429.24px;top:517.00px;font-size:12px;color:#000;letter-spacing:-0.027px">0,26</div>
<div style="position:absolute;left:208px;top:390px;width:65px;height:22px;border:2px solid #217346;box-sizing:border-box"></div>
<div style="position:absolute;left:268px;top:407px;width:6px;height:6px;background:#217346;outline:1px solid #fff"></div>
<svg style="position:absolute;left:0px;top:0px;" width="768" height="576" viewBox="0 0 768 576"><path d="M578.9 358.9H585.8V362.7H589.5V369H585.8V372.9H578.9V369H574.9V362.7H578.9z" fill="#000"/><path d="M580.2 360.2H584.3V364.1H588.1V367.5H584.3V371.3H580.2V367.5H576.3V364.1H580.2z" fill="#fff"/></svg>
<div style="position:absolute;left:750px;top:202px;width:14px;height:326px;background:#dadada;border:1px solid #c6c6c6;box-sizing:border-box"></div>
<div style="position:absolute;left:750px;top:202px;width:14px;height:15px;background:#fff;border:1px solid #c6c6c6;box-sizing:border-box"></div>
<svg style="position:absolute;left:753px;top:206px;" width="8" height="5" viewBox="0 0 8 5"><path d="M0.5 4.5h7L4 0.5z" fill="#666"/></svg>
<div style="position:absolute;left:750px;top:216px;width:14px;height:238px;background:#fff;border:1px solid #bcbcbc;box-sizing:border-box"></div>
<div style="position:absolute;left:750px;top:513px;width:14px;height:15px;background:#fff;border:1px solid #c6c6c6;box-sizing:border-box"></div>
<svg style="position:absolute;left:753px;top:518px;" width="8" height="5" viewBox="0 0 8 5"><path d="M0.5 0.5h7L4 4.5z" fill="#666"/></svg>
<div style="position:absolute;left:1px;top:527px;width:745px;height:1px;background:#ababab"></div>
<div style="position:absolute;left:1px;top:528px;width:765px;height:26px;background:#e6e6e6"></div>
<div style="position:absolute;left:1px;top:554px;width:765px;height:1px;background:#d0d0d0"></div>
<svg style="position:absolute;left:26px;top:536px;" width="6" height="9" viewBox="0 0 6 9"><path d="M5 0.5v8L0.5 4.5z" fill="#c4c4c4"/></svg>
<svg style="position:absolute;left:53px;top:536px;" width="6" height="9" viewBox="0 0 6 9"><path d="M1 0.5v8l4.5-4z" fill="#c4c4c4"/></svg>
<div style="position:absolute;left:97px;top:531px;width:1px;height:19px;background:#9e9e9e"></div>
<div style="position:absolute;left:159.5px;top:531px;width:1px;height:19px;background:#b0b0b0"></div>
<div class="t" style="left:109.50px;top:540.00px;font-size:11px;color:#444;font-weight:normal;letter-spacing:0.301px;">Sheet1</div>
<div class="t" style="left:172.40px;top:540.00px;font-size:11px;color:#444;font-weight:normal;letter-spacing:0.251px;">Sheet2</div>
<div style="position:absolute;left:222px;top:527px;width:62px;height:24px;background:#fff;border-left:1px solid #bcbcbc;border-right:1px solid #bcbcbc;box-sizing:border-box"></div>
<div style="position:absolute;left:222px;top:549px;width:62px;height:2px;background:#217346"></div>
<div class="t" style="left:233.25px;top:540.00px;font-size:11px;color:#217346;font-weight:bold;letter-spacing:0.559px;">Sheet3</div>
<svg style="position:absolute;left:315px;top:532px;" width="17" height="17" viewBox="0 0 17 17"><circle cx="8.5" cy="8.5" r="7.4" fill="none" stroke="#777" stroke-width="1"/><path d="M4.5 8.5h8M8.5 4.5v8" stroke="#666" stroke-width="1.4"/></svg>
<svg style="position:absolute;left:0px;top:0px;" width="768" height="576" viewBox="0 0 768 576"><rect x="460.9" y="535.5" width="1.8" height="1.8" fill="#a8a8a8"/><rect x="460.9" y="539.5" width="1.8" height="1.8" fill="#a8a8a8"/><rect x="460.9" y="543.5" width="1.8" height="1.8" fill="#a8a8a8"/></svg>
<div style="position:absolute;left:477px;top:534px;width:270px;height:14px;background:#dadada;border:1px solid #c6c6c6;box-sizing:border-box"></div>
<div style="position:absolute;left:477px;top:534px;width:15px;height:14px;background:#fff;border:1px solid #c6c6c6;box-sizing:border-box"></div>
<svg style="position:absolute;left:481px;top:537px;" width="5" height="8" viewBox="0 0 5 8"><path d="M4.5 0.5v7L0.5 4z" fill="#666"/></svg>
<div style="position:absolute;left:491px;top:534px;width:219px;height:14px;background:#fff;border:1px solid #bcbcbc;box-sizing:border-box"></div>
<div style="position:absolute;left:732px;top:534px;width:15px;height:14px;background:#fff;border:1px solid #c6c6c6;box-sizing:border-box"></div>
<svg style="position:absolute;left:737px;top:537px;" width="5" height="8" viewBox="0 0 5 8"><path d="M0.5 0.5v7L4.5 4z" fill="#666"/></svg>
<div class="t" style="left:8.40px;top:565.00px;font-size:11px;color:#444;font-weight:normal;letter-spacing:-0.799px;">Ready</div>
<div style="position:absolute;left:468.5px;top:555px;width:38px;height:20px;background:#d4d4d4"></div>
<svg style="position:absolute;left:480px;top:557px;" width="14" height="14" viewBox="0 0 14 14"><rect x="1" y="1" width="12" height="12" fill="none" stroke="#444" stroke-width="1.2"/><path d="M5 1v12M9 1v12M1 5h12M1 9h12" stroke="#444" stroke-width="1"/></svg>
<svg style="position:absolute;left:518px;top:557px;" width="15" height="14" viewBox="0 0 15 14"><rect x="1" y="1" width="13" height="12" fill="none" stroke="#444" stroke-width="1.2"/><rect x="3.5" y="3.5" width="8" height="7" fill="none" stroke="#666" stroke-width="1"/><path d="M5 5h5M5 6.5h5M5 8h5" stroke="#999" stroke-width="0.7"/></svg>
<svg style="position:absolute;left:557px;top:557px;" width="15" height="14" viewBox="0 0 15 14"><rect x="1" y="1" width="13" height="12" fill="none" stroke="#444" stroke-width="1.2"/><path d="M1 8h8V1M5 1v7" fill="none" stroke="#444" stroke-width="1"/></svg>
<div style="position:absolute;left:589px;top:563px;width:8px;height:1.5px;background:#777"></div>
<div style="position:absolute;left:602px;top:564px;width:96px;height:1.5px;background:#c6c6c6"></div>
<div style="position:absolute;left:648px;top:559.5px;width:5px;height:11px;background:#6b6b6b"></div>
<svg style="position:absolute;left:702px;top:560px;" width="9" height="9" viewBox="0 0 9 9"><path d="M0.5 4.5h8M4.5 0.5v8" stroke="#777" stroke-width="1.4"/></svg>
<div class="t" style="left:723.30px;top:564.00px;font-size:11px;color:#555;font-weight:normal;letter-spacing:-0.984px;">100%</div>
<div style="position:absolute;left:1px;top:35px;width:1px;height:540px;background:rgba(255,250,252,0.55)"></div>
<div style="position:absolute;left:766px;top:35px;width:1px;height:540px;background:rgba(255,250,252,0.45)"></div>
<div style="position:absolute;left:1px;top:574px;width:766px;height:1px;background:rgba(255,250,252,0.75)"></div>
</body></html>
